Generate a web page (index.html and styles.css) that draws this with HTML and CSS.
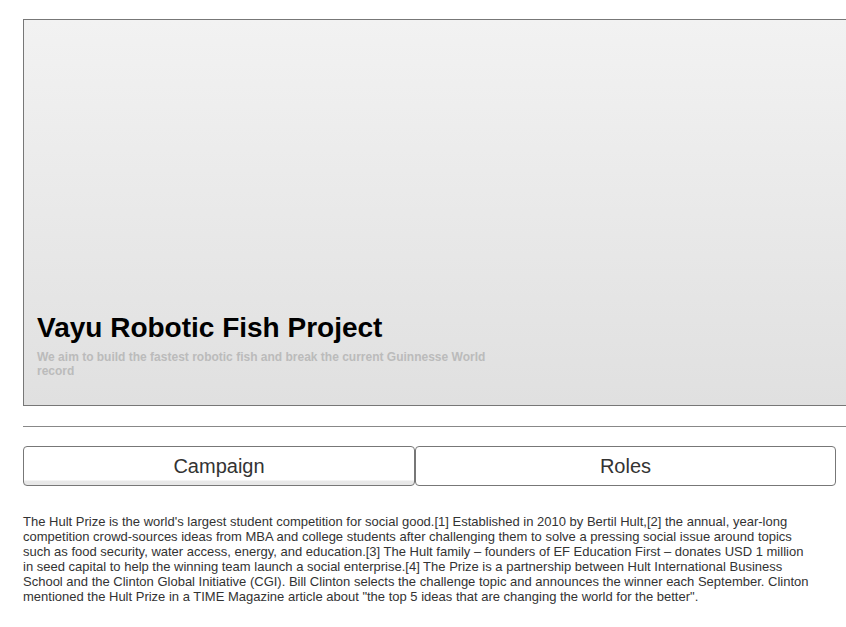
FILE: index.html
```html
<!DOCTYPE html>
<html>
<head>
<meta charset="utf-8">
<link rel="stylesheet" href="styles.css">
</head>
<body>
<div class="page">
  <header class="hero">
    <h1 class="hero-title">Vayu Robotic Fish Project</h1>
    <p class="hero-sub">We aim to build the fastest robotic fish and break the current Guinnesse World record</p>
  </header>
  <hr class="divider">
  <nav class="tabs">
    <button class="tab tab-active">Campaign</button>
    <button class="tab">Roles</button>
  </nav>
  <p class="content">The Hult Prize is the world's largest student competition for social good.[1] Established in 2010 by Bertil Hult,[2] the annual, year-long competition crowd-sources ideas from MBA and college students after challenging them to solve a pressing social issue around topics such as food security, water access, energy, and education.[3] The Hult family – founders of EF Education First – donates USD 1 million in seed capital to help the winning team launch a social enterprise.[4] The Prize is a partnership between Hult International Business School and the Clinton Global Initiative (CGI). Bill Clinton selects the challenge topic and announces the winner each September. Clinton mentioned the Hult Prize in a TIME Magazine article about "the top 5 ideas that are changing the world for the better".</p>
</div>
</body>
</html>
```
FILE: styles.css
```css
html, body {
  margin: 0;
  padding: 0;
  overflow: hidden;
  background: #fff;
  font-family: "Liberation Sans", Arial, sans-serif;
}
.page {
  padding: 19px 0 0 23px;
  width: 813px;
}
.hero {
  box-sizing: border-box;
  width: 840px;
  height: 387px;
  border: 1px solid #777;
  background: linear-gradient(#f2f2f2, #e0e0e0);
  display: flex;
  flex-direction: column;
  justify-content: flex-end;
  padding: 0 0 27px 13px;
}
.hero-title {
  margin: 0;
  font-size: 28px;
  line-height: 34px;
  font-weight: bold;
  color: #000;
}
.hero-sub {
  margin: 5px 0 0 0;
  width: 470px;
  font-size: 12px;
  line-height: 14px;
  font-weight: bold;
  color: #bbb;
}
.divider {
  width: 840px;
  margin: 20px 0 0 0;
  border: 0;
  border-top: 1px solid #888;
  height: 0;
}
.tabs {
  display: flex;
  margin-top: 19px;
}
.tab {
  box-sizing: border-box;
  height: 40px;
  border: 1px solid #777;
  border-radius: 4px;
  background: #fff;
  font-family: "Liberation Sans", Arial, sans-serif;
  font-size: 20px;
  color: #333;
  padding: 0;
}
.tab:first-child {
  width: 392px;
}
.tab:last-child {
  width: 421px;
}
.tab-active {
  background: linear-gradient(#fff 0, #fff 33px, #e8e8e8 34px, #e8e8e8 100%);
}
.content {
  margin: 28px 0 0 0;
  width: 787px;
  font-size: 13px;
  line-height: 15px;
  color: #333;
}
```
